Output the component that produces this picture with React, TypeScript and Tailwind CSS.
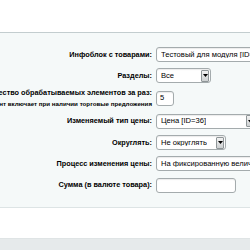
// Форма групповой смены цен — панель с полями, как в админке.

const LABEL = "font-bold text-[7.3px] leading-none text-[#000] whitespace-nowrap";

function Select({ value, width }: { value: string; width: string }) {
  return (
    <div
      className={`${width} h-[15px] flex items-center justify-between bg-white border border-[#a4abad] rounded-[3px] shadow-[inset_0_1px_1px_rgba(0,0,0,0.08)] pl-[4px] pr-[1px] shrink-0`}
    >
      <span className="text-[7.6px] leading-none text-[#000] whitespace-nowrap overflow-hidden">{value}</span>
      <span className="w-[8px] h-[12px] flex items-center justify-center bg-gradient-to-b from-[#f2f2f2] to-[#cdd0d1] border border-[#8f9698] rounded-[1px] shrink-0">
        <svg width="5" height="3" viewBox="0 0 5 3">
          <path d="M0 0h5L2.5 3z" fill="#000" />
        </svg>
      </span>
    </div>
  );
}

function Input({ value, width }: { value?: string; width: string }) {
  return (
    <div
      className={`${width} h-[15px] flex items-center bg-white border border-[#a4abad] rounded-[3px] shadow-[inset_0_1px_1px_rgba(0,0,0,0.08)] px-[3px] shrink-0`}
    >
      <span className="text-[7.6px] leading-none text-[#000]">{value}</span>
    </div>
  );
}

function Row({ label, sub, h, children }: { label: string; sub?: string; h: string; children: React.ReactNode }) {
  return (
    <div className={`grid grid-cols-[152px_1fr] gap-x-[4px] items-center ${h}`}>
      <div className="flex flex-col items-end gap-[4px]">
        <span className={LABEL}>{label}</span>
        {sub && <span className="font-bold text-[6.2px] leading-none text-[#000] whitespace-nowrap">{sub}</span>}
      </div>
      <div className="flex items-center min-w-0">{children}</div>
    </div>
  );
}

export default function App() {
  return (
    <div className="w-[250px] h-[250px] overflow-hidden bg-white font-['Liberation_Sans',Arial,sans-serif]">
      <div className="h-[32px] bg-white" />
      <div className="border-t border-[#c3cdcf] border-b border-b-[#dde4e5] bg-[#f5f9f9] pt-[11px] pb-[11px]">
        <Row label="Инфоблок с товарами:" h="h-[21px]">
          <Select value="Тестовый для модуля [ID=4]" width="w-[130px]" />
        </Row>
        <Row label="Разделы:" h="h-[21px]">
          <Select value="Все" width="w-[55px]" />
        </Row>
        <Row
          label="Количество обрабатываемых элементов за раз:"
          sub="Этот элемент включает при наличии торговые предложения"
          h="h-[24px]"
        >
          <Input value="5" width="w-[18px]" />
        </Row>
        <Row label="Изменяемый тип цены:" h="h-[22px]">
          <Select value="Цена [ID=36]" width="w-[100px]" />
        </Row>
        <Row label="Округлять:" h="h-[21px]">
          <Select value="Не округлять" width="w-[70px]" />
        </Row>
        <Row label="Процесс изменения цены:" h="h-[21px]">
          <Select value="На фиксированную величину" width="w-[130px]" />
        </Row>
        <Row label="Сумма (в валюте товара):" h="h-[22px]">
          <Input width="w-[80px]" />
        </Row>
      </div>
      <div className="h-[30px] bg-white" />
      <div className="h-[20px] bg-[#e6eaeb] border-t border-[#dfe4e5]" />
    </div>
  );
}
